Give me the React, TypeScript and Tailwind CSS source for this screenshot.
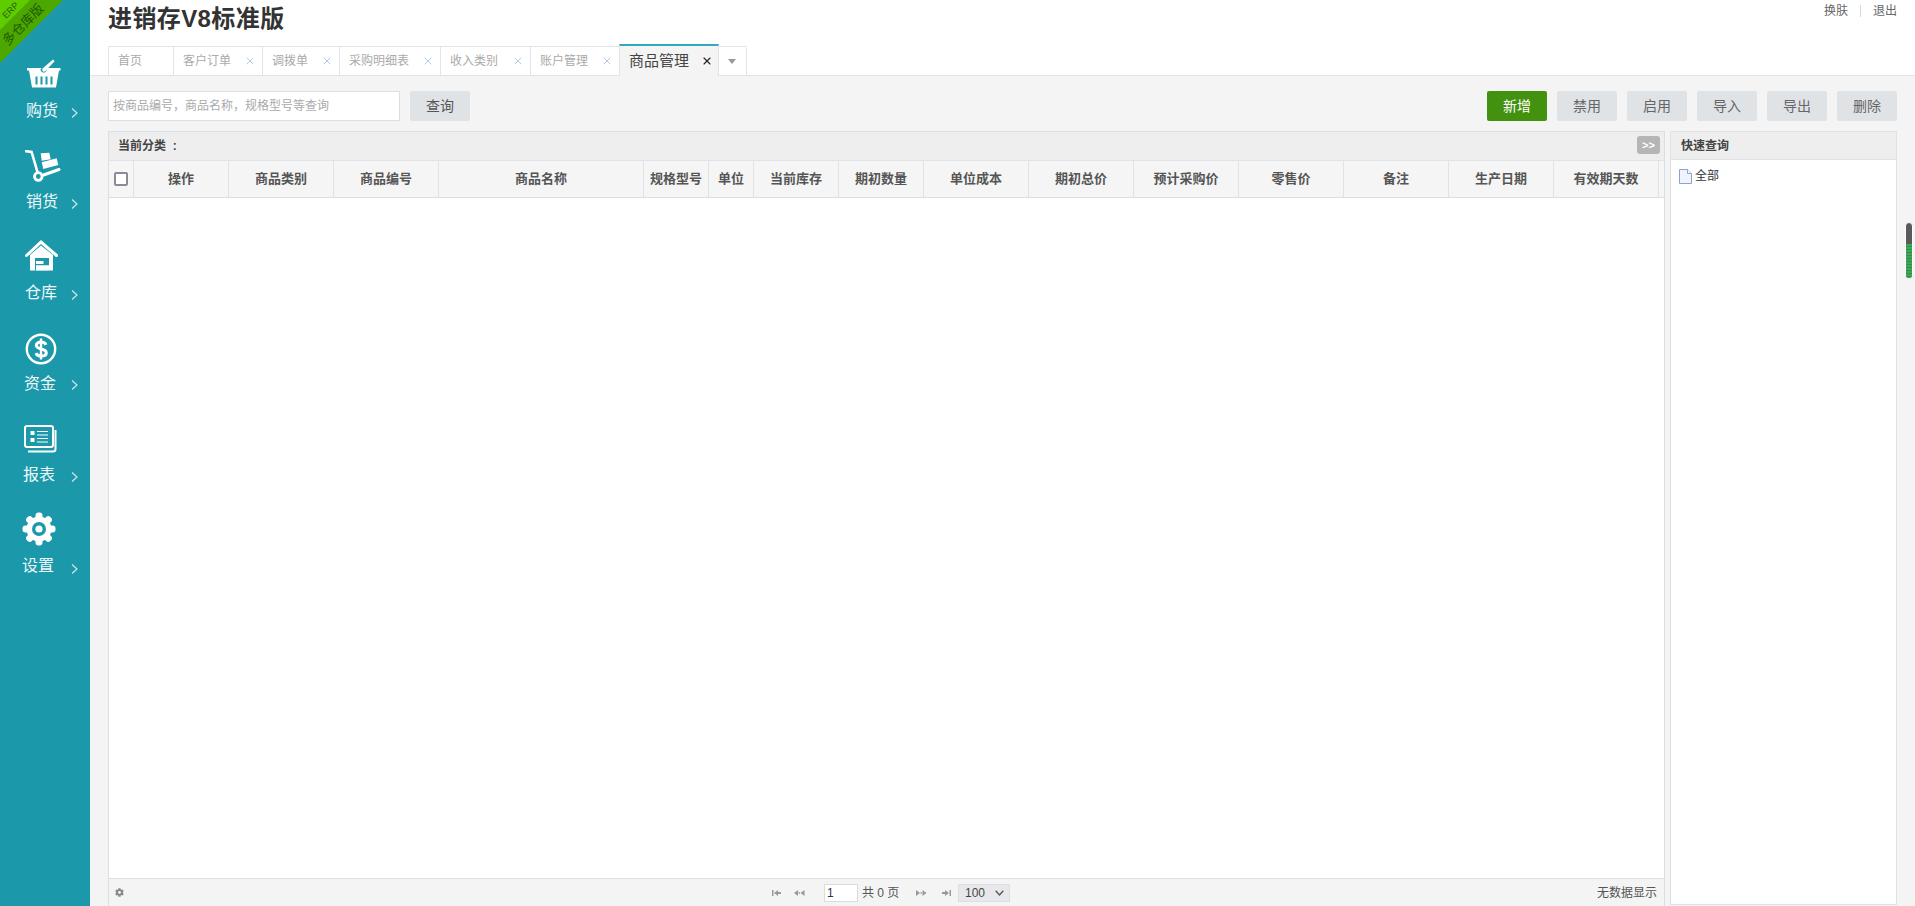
import React from "react";
import { X } from "lucide-react";
import { FaCog } from "react-icons/fa";

const font = "[font-family:'Liberation_Sans','Noto_Sans_CJK_SC',sans-serif]";

const BasketIcon = () => (
  <svg width="34" height="29" viewBox="0 0 34 29" fill="#fff">
    <path d="M0 9h14.5l-1 1.5a3.2 3.2 0 0 0 5 2.5L20.5 9H33.500v2.500h-1.500L29 28.500H5L2 11.500H0z" />
    <path d="M15.500 9.500 26 0.500l1.600 1.800-9 9.500a1.800 1.800 0 0 1-3-2.300z" />
    <path
      fill="#1b98aa"
      d="M8.500 17.500h2v8h-2zM13.500 17.500h2v8h-2zM18.500 17.500h2v8h-2zM23.500 17.500h2v8h-2z"
    />
  </svg>
);

const TruckIcon = () => (
  <svg width="36" height="32" viewBox="0 0 36 32" fill="none">
    <path d="M1 1.200 6.600 2l5.700 19.500" stroke="#fff" strokeWidth="2.600" strokeLinecap="round" />
    <circle cx="13.300" cy="26.500" r="3.800" stroke="#fff" strokeWidth="2.800" />
    <path d="M18.500 25 34 19.500" stroke="#fff" strokeWidth="3" strokeLinecap="round" />
    <path d="M15.700 3.300 24.300 2.700 25.700 9.300 16.700 10.700zM16.700 12.300 31.700 8.300 33.300 15 18.300 19z" fill="#fff" />
  </svg>
);

const WarehouseIcon = () => (
  <svg width="33" height="31" viewBox="0 0 33 31" fill="none">
    <path d="M1.500 15.500 16 2l15.500 13.500" stroke="#fff" strokeWidth="3" strokeLinecap="round" />
    <path d="M5 15 16 5.500 28 15v15.500H5z" fill="#fff" />
    <path d="M10 18h14v12.500H10z" fill="#1b98aa" />
    <path d="M11 21h7.500v3H11zM11 25.200h13v5.300H11z" fill="#fff" />
  </svg>
);

const DollarIcon = () => (
  <svg width="32" height="32" viewBox="0 0 32 32" fill="none">
    <circle cx="16" cy="16" r="14.200" stroke="#fff" strokeWidth="2.400" />
    <path
      d="M21 11.800c-.8-1.800-2.600-2.800-5-2.800-2.800 0-4.700 1.300-4.700 3.300 0 4.800 10 2.600 10 7.400 0 2.100-2 3.400-5 3.400-2.600 0-4.600-1.100-5.400-3"
      stroke="#fff"
      strokeWidth="3"
    />
    <path d="M16 5.500v21" stroke="#fff" strokeWidth="2.400" />
  </svg>
);

const ReportIcon = () => (
  <svg width="33" height="28" viewBox="0 0 33 28" fill="none">
    <rect x="1" y="1" width="28" height="21" rx="2" stroke="#fff" strokeWidth="2" />
    <path d="M31.500 5v19a2.500 2.500 0 0 1-2.500 2.500H4" stroke="#fff" strokeWidth="2" />
    <path d="M6.500 6h4v4h-4zM6.500 13h4v4h-4z" fill="#fff" />
    <path d="M13 6.500h11M13 10h11M13 13.500h11M13 17h11" stroke="#fff" strokeWidth="1.200" />
  </svg>
);

const gearAngles = [0, 45, 90, 135, 180, 225, 270, 315];

const GearIcon = () => (
  <svg width="34" height="34" viewBox="0 0 34 34">
    <circle cx="17" cy="17" r="12.500" fill="#fff" />
    {gearAngles.map((a) => (
      <rect key={a} x="13.500" y="0.500" width="7" height="8" rx="3" fill="#fff" transform={`rotate(${a} 17 17)`} />
    ))}
    <circle cx="17" cy="17" r="7" fill="#1b98aa" />
    <circle cx="17" cy="17" r="3.600" fill="#fff" />
  </svg>
);

const navItems = [
  { label: "购货", icon: <BasketIcon />, cls: "pl-[26px]", iconCls: "pl-[27px] pt-[18px]" },
  { label: "销货", icon: <TruckIcon />, cls: "pl-[26px]", iconCls: "pl-[25px] pt-[18px]" },
  { label: "仓库", icon: <WarehouseIcon />, cls: "pl-[25px]", iconCls: "pl-[25px] pt-[17px]" },
  { label: "资金", icon: <DollarIcon />, cls: "pl-[24px]", iconCls: "pl-[25px] pt-[19px]" },
  { label: "报表", icon: <ReportIcon />, cls: "pl-[23px]", iconCls: "pl-[24px] pt-[20px]" },
  { label: "设置", icon: <GearIcon />, cls: "pl-[22px]", iconCls: "pl-[22px] pt-[16px]" },
];

const chevrons = ["top-[108px]", "top-[199px]", "top-[290px]", "top-[380px]", "top-[472px]", "top-[564px]"];

const tabs = [
  { name: "首页", cls: "w-[65px] rounded-tl-[2px]" },
  { name: "客户订单", close: true, cls: "w-[89px]" },
  { name: "调拨单", close: true, cls: "w-[77px]" },
  { name: "采购明细表", close: true, cls: "w-[101px]" },
  { name: "收入类别", close: true, cls: "w-[90px]" },
  { name: "账户管理", close: true, cls: "w-[89px]" },
];

const columns = [
  { name: "操作", cls: "w-[95px]" },
  { name: "商品类别", cls: "w-[105px]" },
  { name: "商品编号", cls: "w-[105px]" },
  { name: "商品名称", cls: "w-[205px]" },
  { name: "规格型号", cls: "w-[65px]" },
  { name: "单位", cls: "w-[45px]" },
  { name: "当前库存", cls: "w-[85px]" },
  { name: "期初数量", cls: "w-[85px]" },
  { name: "单位成本", cls: "w-[105px]" },
  { name: "期初总价", cls: "w-[105px]" },
  { name: "预计采购价", cls: "w-[105px]" },
  { name: "零售价", cls: "w-[105px]" },
  { name: "备注", cls: "w-[105px]" },
  { name: "生产日期", cls: "w-[105px]" },
  { name: "有效期天数", cls: "w-[105px]" },
];

const PagerIcon = ({ d }: { d: string }) => (
  <svg width="12" height="8" viewBox="0 0 12 8" fill="#999">
    <path d={d} />
  </svg>
);

const Sidebar = () => (
  <div className="relative w-[90px] h-full shrink-0 bg-[#1b98aa] pt-[41px] overflow-hidden">
    <svg className="absolute left-0 top-0" width="63" height="63" viewBox="0 0 63 63">
      <polygon points="0,0 63,0 0,63" fill="#4ca800" />
      <polygon points="0,0 30,0 0,30" fill="#5fcc00" />
    </svg>
    <div className="absolute left-[2px] top-[7px] w-[16px] text-center text-[9px] leading-[9px] text-[#1f5c10] -rotate-45">
      ERP
    </div>
    <div className="absolute left-[-3px] top-[18px] w-[52px] text-center text-[13px] leading-[13px] whitespace-nowrap text-[#1d5a00] -rotate-45">
      多仓库版
    </div>
    {navItems.map((item) => (
      <div key={item.label} className="h-[91px] flex flex-col">
        <div className={`h-[60px] ${item.iconCls}`}>{item.icon}</div>
        <div className={`h-[20px] text-[16px] leading-[20px] text-[#eef8fa] ${item.cls}`}>{item.label}</div>
      </div>
    ))}
    {chevrons.map((top) => (
      <svg key={top} className={`absolute left-[71px] ${top}`} width="7" height="10" viewBox="0 0 7 10" fill="none">
        <path d="M1 .5 6 5 1 9.500" stroke="#cfe6ea" strokeWidth="1.200" />
      </svg>
    ))}
  </div>
);

const Header = () => (
  <div className="relative h-[76px] shrink-0 bg-white border-b border-[#e1e4e6] pl-[18px]">
    <div className="h-[46px] pt-[4px] text-[24px] leading-[30px] font-bold tracking-[0.4px] text-[#333]">
      进销存V8标准版
    </div>
    <div className="absolute right-[18px] top-[4px] flex items-center text-[12px] leading-[14px] text-[#666]">
      <span>换肤</span>
      <span className="mx-[12px] h-[12px] w-px bg-[#d8d8d8]"></span>
      <span>退出</span>
    </div>
    <div className="flex items-end h-[29px]">
      {tabs.map((t) => (
        <div
          key={t.name}
          className={`flex items-center justify-between h-[29px] bg-white border-l border-t border-[#e1e4e6] pl-[9px] pr-[6px] text-[12px] text-[#aaa] ${t.cls}`}
        >
          <span>{t.name}</span>
          {t.close && <X size={12} color="#a9c3e8" strokeWidth={1.8} />}
        </div>
      ))}
      <div className="flex items-center justify-between w-[100px] h-[32px] mb-[-1px] bg-[#f4f4f4] border-x border-[#e1e4e6] border-t-2 border-t-[#36a8bd] pl-[9px] pr-[5px] text-[15px] text-[#444]">
        <span>商品管理</span>
        <X size={12} color="#222" strokeWidth={2.2} />
      </div>
      <div className="flex items-center justify-center w-[28px] h-[29px] pr-[2px] bg-white border-r border-t border-[#e1e4e6] rounded-tr-[2px]">
        <svg width="8" height="5" viewBox="0 0 8 5">
          <path d="M0 0h8L4 5z" fill="#999" />
        </svg>
      </div>
    </div>
  </div>
);

const Toolbar = () => (
  <div className="flex items-center justify-between h-[30px] shrink-0">
    <div className="flex gap-[10px]">
      <input
        readOnly
        placeholder="按商品编号，商品名称，规格型号等查询"
        className="w-[292px] h-[30px] bg-white border border-[#d9dfe4] px-[4px] text-[12px] outline-none placeholder:text-[#aaa]"
      />
      <button className="w-[60px] h-[30px] rounded-[2px] bg-[#dfe3e6] text-[14px] text-[#555]">查询</button>
    </div>
    <div className="flex gap-[10px]">
      <button className="w-[60px] h-[30px] rounded-[2px] bg-[#43920f] text-[14px] text-white">新增</button>
      {["禁用", "启用", "导入", "导出", "删除"].map((b) => (
        <button key={b} className="w-[60px] h-[30px] rounded-[2px] bg-[#dfe3e6] text-[14px] text-[#666]">
          {b}
        </button>
      ))}
    </div>
  </div>
);

const Grid = () => (
  <div className="flex flex-col w-[1557px] h-full border-x border-t border-[#d9dfe6] bg-white">
    <div className="relative flex items-center h-[29px] shrink-0 bg-[#eeeeee] border-b border-[#dfe3e8] pl-[9px] text-[12px] font-bold whitespace-pre text-[#444]">
      当前分类  :
      <div className="absolute right-[4px] top-[4px] flex items-center justify-center w-[23px] h-[18px] rounded-[3px] bg-[#b5b5b5] text-[11px] font-bold leading-none text-white">
        &gt;&gt;
      </div>
    </div>
    <div className="flex h-[37px] shrink-0 bg-[#f5f5f5] border-b border-[#d9dfe6]">
      <div className="flex items-center justify-center w-[25px] border-r border-[#dfe3e8]">
        <div className="w-[14px] h-[14px] rounded-[2px] border-2 border-[#8b8b98] bg-white"></div>
      </div>
      {columns.map((c) => (
        <div
          key={c.name}
          className={`flex items-center justify-center border-r border-[#dfe3e8] text-[13px] font-bold text-[#555] whitespace-nowrap ${c.cls}`}
        >
          {c.name}
        </div>
      ))}
    </div>
    <div className="flex-1 bg-white"></div>
    <div className="flex items-center h-[28px] shrink-0 bg-[#f4f4f4] border-t border-[#d9dfe6] pl-[6px] text-[12px] text-[#555]">
      <FaCog size={9} color="#888" />
      <div className="flex items-center ml-[648px]">
        <PagerIcon d="M0 1h1.500v6H0zM2 4l4-3v6zM6 3h3v2H6z" />
        <span className="w-[10px]"></span>
        <PagerIcon d="M0 4l4-3v6zM4.500 3.300h1.500v1.400H4.500zM6.500 4l4-3v6z" />
        <input
          readOnly
          value="1"
          className="ml-[18px] w-[34px] h-[18px] bg-white border border-[#dcdcdc] px-[2px] text-[12px] text-[#334] outline-none"
        />
        <span className="ml-[4px] w-[40px] whitespace-nowrap">共 0 页</span>
        <span className="w-[14px]"></span>
        <PagerIcon d="M0 1l4 3-4 3zM4.500 3.300h1.500v1.400H4.500zM6.500 1l4 3-4 3z" />
        <span className="w-[14px]"></span>
        <PagerIcon d="M0 3h3v2H0zM3 1l4 3-4 3zM7.500 1H9v6H7.500z" />
        <div className="flex items-center justify-between ml-[4px] w-[52px] h-[18px] bg-[#e8e8ec] border border-[#dedee2] pl-[6px] pr-[5px] text-[#444]">
          100
          <svg width="9" height="6" viewBox="0 0 9 6" fill="none">
            <path d="M.7.7 4.500 5 8.300.7" stroke="#555" strokeWidth="1.300" />
          </svg>
        </div>
      </div>
      <span className="ml-auto pr-[7px]">无数据显示</span>
    </div>
  </div>
);

const QuickPanel = () => (
  <div className="flex flex-col w-[227px] h-[774px] border border-[#dfe1e4] bg-white">
    <div className="flex items-center h-[28px] shrink-0 bg-[#eeeeee] border-b border-[#dfe1e4] pl-[10px] text-[12px] font-bold text-[#444]">
      快速查询
    </div>
    <div className="flex items-center pl-[8px] pt-[7px] text-[12px] text-[#333]">
      <svg width="13" height="15" viewBox="0 0 13 15">
        <path d="M.5.500h8l4 4v10H.500z" fill="#eef3fd" stroke="#8ea4cc" />
        <path d="M8.500.500v4h4" fill="#fff" stroke="#8ea4cc" />
      </svg>
      <span className="ml-[3px]">全部</span>
    </div>
  </div>
);

export default function App() {
  return (
    <div className={`relative flex w-[1915px] h-[906px] overflow-hidden bg-[#f4f4f4] ${font}`}>
      <Sidebar />
      <div className="flex flex-col flex-1 min-w-0">
        <Header />
        <div className="flex flex-col flex-1 min-h-0 px-[18px] pt-[15px] gap-[10px]">
          <Toolbar />
          <div className="flex flex-1 min-h-0 gap-[5px]">
            <Grid />
            <QuickPanel />
          </div>
        </div>
      </div>
      {/* page scroller thumb */}
      <div className="absolute right-[2px] top-[222px] w-[8px] h-[57px] rounded-full border border-white bg-[#5a5a5a] overflow-hidden">
        <div className="mt-[21px] h-[36px] bg-[repeating-linear-gradient(180deg,#2fb04f_0,#2fb04f_2px,#4f7d5c_2px,#4f7d5c_3px)]"></div>
      </div>
    </div>
  );
}
